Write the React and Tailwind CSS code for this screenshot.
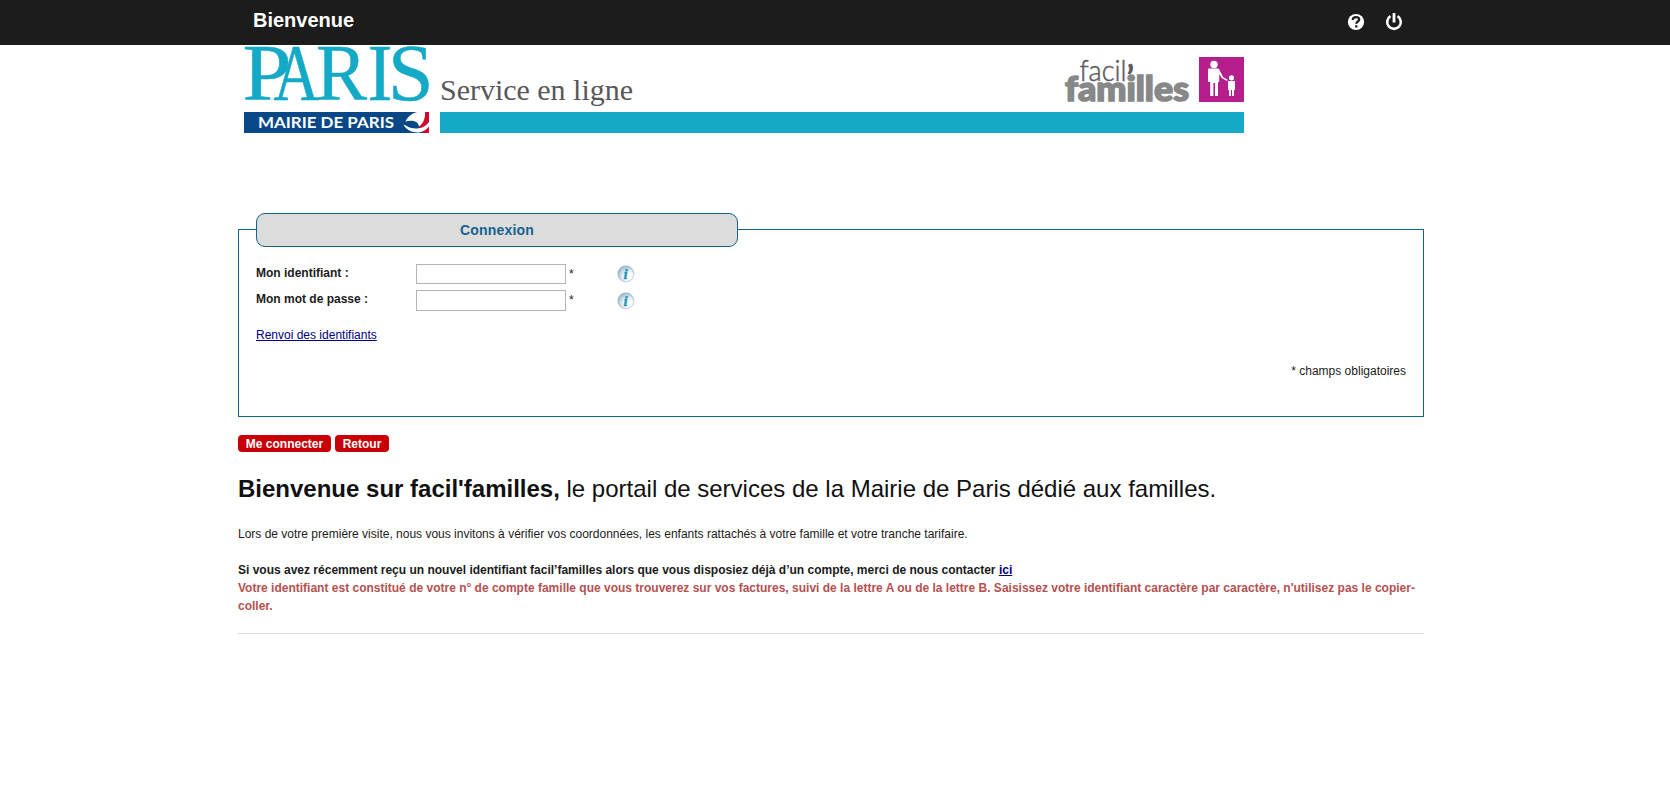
import React from "react";

function Info() {
  return (
    <svg width="18" height="18" viewBox="0 0 18 18">
      <defs>
        <linearGradient id="ring" x1="0" y1="0" x2="1" y2="1">
          <stop offset="0" stopColor="#8da4b5" />
          <stop offset="0.5" stopColor="#b9c9d4" />
          <stop offset="1" stopColor="#e0e3e6" />
        </linearGradient>
        <radialGradient id="glass" cx="0.68" cy="0.72" r="0.7">
          <stop offset="0.4" stopColor="#ffffff" />
          <stop offset="1" stopColor="#a4cbdc" />
        </radialGradient>
      </defs>
      <circle cx="9" cy="9" r="7.8" fill="url(#glass)" stroke="url(#ring)" strokeWidth="1.4" />
      <text x="6.5" y="13.500" fontFamily="Liberation Serif, serif" fontStyle="italic" fontWeight="bold" fontSize="15" fill="#2593bd" stroke="#2593bd" strokeWidth="0.4">i</text>
    </svg>
  );
}

function Banner() {
  return (
    <svg className="block overflow-visible" width="1010" height="88" viewBox="238 45 1010 88">
      <g fill="#14a9c6" stroke="#14a9c6" strokeWidth="0.5" fontFamily="Liberation Serif, serif" fontSize="80">
        <text x="242.500" y="100" textLength="49" lengthAdjust="spacingAndGlyphs">P</text>
        <text x="273.500" y="100" textLength="46" lengthAdjust="spacingAndGlyphs">A</text>
        <text x="316" y="100" textLength="51" lengthAdjust="spacingAndGlyphs">R</text>
        <text x="367.500" y="100" textLength="25" lengthAdjust="spacingAndGlyphs">I</text>
        <text x="388" y="100" textLength="45.500" lengthAdjust="spacingAndGlyphs">S</text>
      </g>
      <rect x="244" y="112" width="185" height="21" fill="#084886" />
      <text x="258" y="128" textLength="136" lengthAdjust="spacingAndGlyphs" fontFamily="Lato, sans-serif" fontWeight="bold" fontSize="15.5" fill="#fff">MAIRIE DE PARIS</text>
      <path d="M425 112h4v21h-6l-4-7z" fill="#cf0a2c" />
      <path d="M405.500 121.500C408 116 413 112.500 418 112h7c.5 5-1 11-6 14.500C418 121 412 120 405.500 121.500z" fill="#fff" />
      <path d="M403.500 124.500c3 1 6 4 12 4 6 0 10-2 13.500-6.500v4.500c-3 3.500-7 6-11.500 6-6 0-12-3.500-14-8z" fill="#fff" />
      <text x="440" y="100" textLength="193" lengthAdjust="spacingAndGlyphs" fontFamily="Liberation Serif, serif" fontSize="30" fill="#58585a">Service en ligne</text>
      <rect x="440" y="112" width="804" height="21" fill="#14a9c6" />
      <text x="1065" y="100.500" textLength="124" lengthAdjust="spacingAndGlyphs" fontFamily="Lato, sans-serif" fontWeight="900" fontSize="34" fill="#87888a" stroke="#87888a" strokeWidth="1.6">familles</text>
      <text x="1079.500" y="80.5" textLength="47" lengthAdjust="spacingAndGlyphs" fontFamily="Lato, sans-serif" fontWeight="300" fontSize="28.500" fill="#5b5b5d" stroke="#5b5b5d" strokeWidth="0.5">facil</text>
      <text x="1126.500" y="89.500" fontFamily="Lato, sans-serif" fontWeight="900" fontSize="34" fill="#5b5b5d">’</text>
      <rect x="1199" y="57" width="45" height="45" fill="#b61e8d" />
      <g fill="#fff">
        <circle cx="1214" cy="64.5" r="3.7" />
        <path d="M1208 69.500q0-1 1-1h9q1 0 1.500 1.500l3.500 7 4.700 2.700-.7 1.300-5.300-3-2.500-4V82h-1.200v14h-3V83h-1.600v13h-3.200V82h-2.200z" />
        <circle cx="1231.5" cy="77.800" r="2.6" />
        <path d="M1228 81h7v9h-1v6h-2v-6h-1v6h-2v-6h-1z" />
      </g>
    </svg>
  );
}

function Field({ label, type, inputClass, infoClass }) {
  return (
    <div className="flex h-[26px] items-start">
      <label className="w-[160px] font-bold">{label}</label>
      <input type={type} className={`w-[150px] border border-[#b4b4b4] bg-white ${inputClass}`} />
      <span className="w-[51px] pl-[3px] pt-[1px]">*</span>
      <div className={infoClass}><Info /></div>
    </div>
  );
}

export default function App() {
  return (
    <div className="min-h-[803px] bg-white font-['Liberation_Sans',sans-serif] text-[12px] leading-[18px] text-[#1b1b1b]">
      <header className="h-[45px] bg-[#1c1c1c]">
        <div className="ml-[238px] flex w-[1186px] justify-between">
          <h1 className="pl-[15px] pt-[8px] text-[20px] font-bold leading-[24px] text-white">Bienvenue</h1>
          <div className="flex gap-[20px] pr-[21px] pt-[13px]">
            <svg width="18" height="18" viewBox="0 0 18 18">
              <circle cx="9" cy="9" r="8.100" fill="#fff" />
              <path d="M5.800 7c0-2 1.400-2.900 3.200-2.900s3.200.8 3.200 2.500c0 2-2.900 1.800-2.900 4.200M9.300 12.200v2.200" fill="none" stroke="#1c1c1c" strokeWidth="2.300" />
            </svg>
            <svg width="18" height="18" viewBox="0 0 18 18" fill="none" stroke="#fff" strokeWidth="2.600">
              <path d="M5.500 3.200a6.800 6.800 0 1 0 7 0" />
              <path d="M9 0v9.500" strokeWidth="2.800" />
            </svg>
          </div>
        </div>
      </header>
      <main className="ml-[238px] w-[1186px]">
        <Banner />
        <section className="mt-[96px] h-[188px] border border-[#17618d] px-[17px]">
          <h2 className="-mt-[17px] h-[34px] w-[482px] rounded-[9px] border border-[#17618d] bg-[#dcdcdc] text-center text-[14px] font-bold leading-[33px] tracking-[0.200px] text-[#17618d]">Connexion</h2>
          <div className="pt-[17px]">
            <Field label="Mon identifiant :" type="text" inputClass="h-[20px]" infoClass="pt-[1px]" />
            <Field label="Mon mot de passe :" type="password" inputClass="h-[21px]" infoClass="pt-[2px]" />
          </div>
          <a className="mt-[10px] block w-fit text-[#000080] underline" href="#">Renvoi des identifiants</a>
          <p className="mt-[18px] text-right">* champs obligatoires</p>
        </section>
        <div className="mt-[18px] flex gap-[4px] text-white">
          <button className="h-[17px] w-[93px] rounded-[4px] bg-[#c90006] pt-[1px] font-bold leading-[16px]">Me connecter</button>
          <button className="h-[17px] w-[54px] rounded-[4px] bg-[#c90006] pt-[1px] font-bold leading-[16px]">Retour</button>
        </div>
        <h2 className="mt-[22px] text-[24px] leading-[30px] text-[#111]"><b>Bienvenue sur facil'familles,</b> le portail de services de la Mairie de Paris dédié aux familles.</h2>
        <p className="mt-[21px]">Lors de votre première visite, nous vous invitons à vérifier vos coordonnées, les enfants rattachés à votre famille et votre tranche tarifaire.</p>
        <p className="mt-[18px] font-bold">Si vous avez récemment reçu un nouvel identifiant facil’familles alors que vous disposiez déjà d’un compte, merci de nous contacter <a className="text-[#000080] underline" href="#">ici</a></p>
        <p className="font-bold text-[#b6504f]">Votre identifiant est constitué de votre n° de compte famille que vous trouverez sur vos factures, suivi de la lettre A ou de la lettre B. Saisissez votre identifiant caractère par caractère, n'utilisez pas le copier-coller.</p>
        <hr className="mt-[18px] border-t border-[#dddddd]" />
      </main>
    </div>
  );
}
